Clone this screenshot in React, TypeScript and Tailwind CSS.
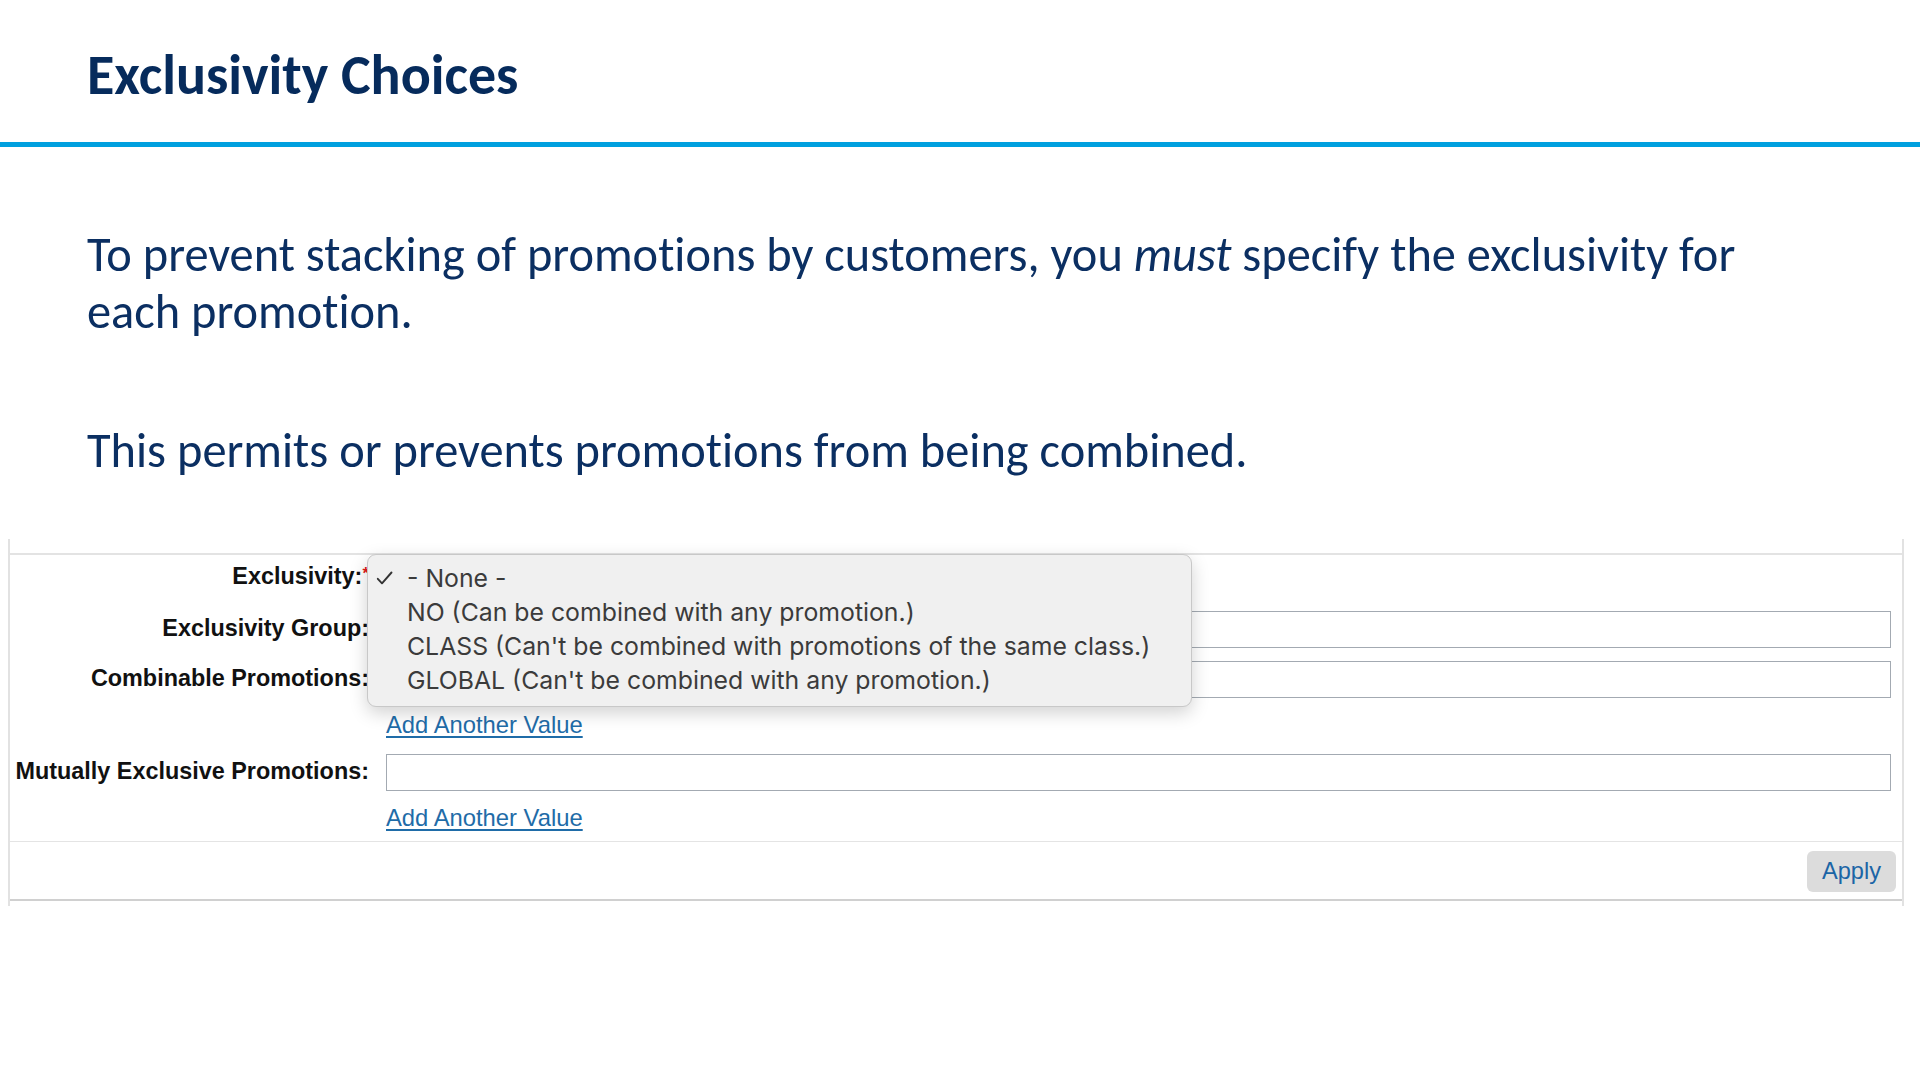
import React from "react";

const labelCls =
  "w-[359px] shrink-0 text-right [font-family:'Liberation_Sans',Arial,sans-serif] font-bold text-[23.4px] leading-[26px] text-[#111111] relative -top-[2px]";
const inputCls = "flex-1 h-[37px] border border-[#a3aab2] bg-white";
const linkCls =
  "[font-family:'Liberation_Sans',Arial,sans-serif] text-[23.8px] leading-[26px] text-[#1f6ca8] underline underline-offset-[3px] decoration-[1.5px]";

function Row({ label, star, children }: { label: string; star?: boolean; children?: React.ReactNode }) {
  return (
    <div className="flex items-center h-[37px]">
      <div className={labelCls}>
        {label}
        {star && <span className="text-[#e0191b] text-[17px] align-top leading-none relative top-[2px]">*</span>}
      </div>
      <div className="w-[17px] shrink-0" />
      {children ?? <div className="flex-1" />}
    </div>
  );
}

function LinkRow() {
  return (
    <div className="flex">
      <div className="w-[376px] shrink-0" />
      <a className={linkCls}>Add Another Value</a>
    </div>
  );
}

export default function App() {
  const options = [
    "- None -",
    "NO (Can be combined with any promotion.)",
    "CLASS (Can't be combined with promotions of the same class.)",
    "GLOBAL (Can't be combined with any promotion.)",
  ];
  return (
    <div className="w-[1920px] h-[1080px] bg-white overflow-hidden">
      <header className="h-[142px] pl-[87px] pt-[47px]">
        <h1 className="[font-family:Carlito,Lato,sans-serif] [font-variant-ligatures:none] font-bold text-[56px] leading-[56px] text-[#062b5c]">
          Exclusivity Choices
        </h1>
      </header>
      <div className="h-[5px] bg-[#00a0df]" />
      <div className="pl-[87px] pt-[79px] [font-family:Carlito,Lato,sans-serif] [font-variant-ligatures:none] text-[48.4px] leading-[57px] text-[#0b2f62]">
        <p className="whitespace-nowrap">
          To prevent stacking of promotions by customers, you <em>must</em> specify the exclusivity for
          <br />
          each promotion.
        </p>
        <p className="mt-[82px] whitespace-nowrap">This permits or prevents promotions from being combined.</p>
      </div>

      <div className="relative ml-[8px] mt-[60px] w-[1896px] border-x-2 border-[#e2e2e2]">
        <div className="h-[14px]" />
        <div className="border-t-2 border-b-2 border-t-[#e3e3e3] border-b-[#d0d0d0]">
          <div className="pt-[4px] pb-[10px] pr-[11px]">
            <Row label="Exclusivity:" star />
            <div className="mt-[15px]">
              <Row label="Exclusivity Group:">
                <div className={inputCls} />
              </Row>
            </div>
            <div className="mt-[13px]">
              <Row label="Combinable Promotions:">
                <div className={inputCls} />
              </Row>
            </div>
            <div className="mt-[14px]">
              <LinkRow />
            </div>
            <div className="mt-[16px]">
              <Row label="Mutually Exclusive Promotions:">
                <div className={inputCls} />
              </Row>
            </div>
            <div className="mt-[14px]">
              <LinkRow />
            </div>
          </div>
          <div className="border-t border-[#e4e4e4] flex justify-end pt-[9px] pb-[7px] pr-[6px]">
            <button className="w-[89px] h-[41px] rounded-[6px] bg-[#dcdcdc] [font-family:'Liberation_Sans',Arial,sans-serif] text-[23.6px] text-[#1b65a6]">
              Apply
            </button>
          </div>
        </div>
        <div className="h-[5px]" />

        <div className="absolute left-[357px] top-[15px] w-[825px] h-[153px] rounded-[9px] border border-[#c8c8c8] bg-[#f0f0f0] shadow-[0_6px_18px_rgba(0,0,0,0.18)] pt-[6px]">
          {options.map((o, i) => (
            <div key={o} className="flex items-center h-[34px]">
              <div className="w-[39px] shrink-0 flex justify-start pl-[8px]">
                {i === 0 && (
                  <svg width="17" height="14" viewBox="0 0 17 14" fill="none">
                    <path d="M1.8 7.8 L6 12.3 L15.5 1.5" stroke="#333333" strokeWidth="1.9" strokeLinecap="round" strokeLinejoin="round" />
                  </svg>
                )}
              </div>
              <span className="[font-family:Inter,Roboto,sans-serif] text-[24.8px] leading-[34px] text-[#3b3b3b] whitespace-nowrap">
                {o}
              </span>
            </div>
          ))}
        </div>
      </div>
    </div>
  );
}
